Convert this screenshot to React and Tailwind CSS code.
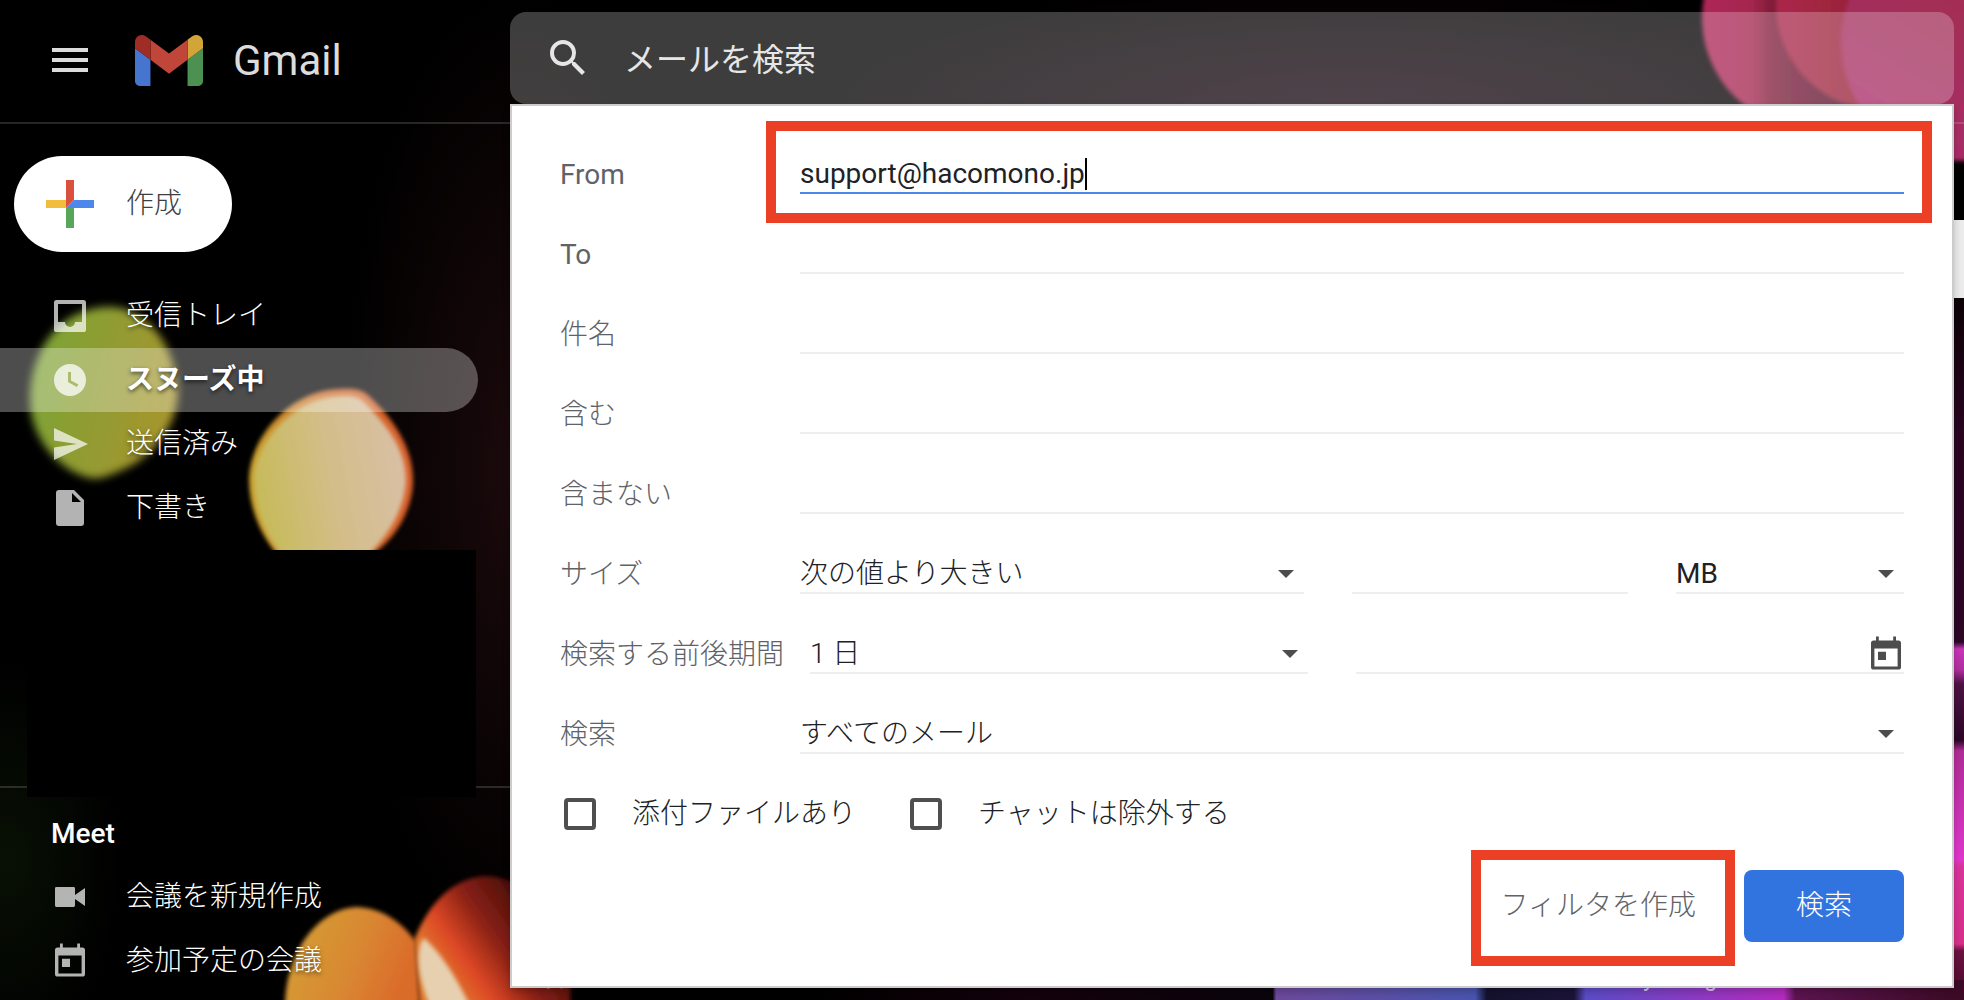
import { useState } from "react";

function Backdrop() {
  return (
    <svg
      className="absolute inset-0 h-full w-full"
      viewBox="0 0 1964 1000"
      preserveAspectRatio="none"
      aria-hidden="true"
    >
      <defs>
        <filter id="soft" x="-20%" y="-20%" width="140%" height="140%">
          <feGaussianBlur stdDeviation="4" />
        </filter>
        <filter id="edge" x="-20%" y="-20%" width="140%" height="140%">
          <feGaussianBlur stdDeviation="2" />
        </filter>
        <radialGradient id="warm">
          <stop offset="0" stopColor="#1c0a0c" />
          <stop offset="1" stopColor="#1c0a0c" stopOpacity="0" />
        </radialGradient>
        <radialGradient id="moss">
          <stop offset="0" stopColor="#081004" />
          <stop offset="1" stopColor="#081004" stopOpacity="0" />
        </radialGradient>
        <radialGradient id="plum">
          <stop offset="0" stopColor="#1a0812" />
          <stop offset="1" stopColor="#1a0812" stopOpacity="0" />
        </radialGradient>
        <linearGradient id="green" x1="0" y1="0.3" x2="1" y2="0.6">
          <stop offset="0" stopColor="#7ba537" />
          <stop offset="0.5" stopColor="#929b30" />
          <stop offset="1" stopColor="#a8952f" />
        </linearGradient>
        <linearGradient id="cream" x1="0" y1="0.6" x2="1" y2="0.4">
          <stop offset="0" stopColor="#c6bb58" />
          <stop offset="0.5" stopColor="#d3bd88" />
          <stop offset="1" stopColor="#d9c0a6" />
        </linearGradient>
        <linearGradient id="rim" x1="0" y1="0" x2="1" y2="0">
          <stop offset="0" stopColor="#c9a02c" />
          <stop offset="0.5" stopColor="#d0692a" />
          <stop offset="1" stopColor="#d9602c" />
        </linearGradient>
        <linearGradient id="amber" x1="0" y1="0" x2="1" y2="0.3">
          <stop offset="0" stopColor="#d3a135" />
          <stop offset="0.6" stopColor="#d98832" />
          <stop offset="1" stopColor="#da6c2b" />
        </linearGradient>
        <linearGradient id="ember" gradientUnits="userSpaceOnUse" x1="435" y1="970" x2="535" y2="900">
          <stop offset="0" stopColor="#e07a2c" />
          <stop offset="0.25" stopColor="#dd4826" />
          <stop offset="0.55" stopColor="#8a2114" />
          <stop offset="1" stopColor="#3f0a0c" />
        </linearGradient>
        <linearGradient id="rose" x1="0" y1="0" x2="1" y2="0">
          <stop offset="0" stopColor="#ae2757" />
          <stop offset="0.22" stopColor="#a5264f" />
          <stop offset="0.32" stopColor="#7d1c38" />
          <stop offset="0.9" stopColor="#3a0a28" />
        </linearGradient>
        <linearGradient id="crimson" x1="0" y1="0" x2="1" y2="0">
          <stop offset="0" stopColor="#ab264c" />
          <stop offset="0.4" stopColor="#982436" />
          <stop offset="1" stopColor="#8a2030" />
        </linearGradient>
        <linearGradient id="orchid" x1="0" y1="1" x2="0.6" y2="0">
          <stop offset="0" stopColor="#b02a72" />
          <stop offset="0.5" stopColor="#a32f5c" />
          <stop offset="1" stopColor="#a52a4a" />
        </linearGradient>
        <linearGradient id="strip" gradientUnits="userSpaceOnUse" x1="0" y1="298" x2="0" y2="1000">
          <stop offset="0" stopColor="#0c0206" />
          <stop offset="0.2" stopColor="#2a0522" />
          <stop offset="0.49" stopColor="#2c0726" />
          <stop offset="0.5" stopColor="#c935b8" />
          <stop offset="0.53" stopColor="#b02f9c" />
          <stop offset="0.55" stopColor="#4d1144" />
          <stop offset="0.63" stopColor="#2c0726" />
          <stop offset="0.645" stopColor="#b02c96" />
          <stop offset="0.8" stopColor="#df36cc" />
          <stop offset="0.81" stopColor="#d8349c" />
          <stop offset="0.92" stopColor="#d6308a" />
          <stop offset="0.93" stopColor="#6a123e" />
          <stop offset="1" stopColor="#4a0a2c" />
        </linearGradient>
        <linearGradient id="floor" gradientUnits="userSpaceOnUse" x1="800" y1="0" x2="1964" y2="0">
          <stop offset="0" stopColor="#000000" />
          <stop offset="0.2" stopColor="#14020c" />
          <stop offset="0.406" stopColor="#0a040c" />
          <stop offset="0.409" stopColor="#6d4a9c" />
          <stop offset="0.58" stopColor="#4a55b0" />
          <stop offset="0.59" stopColor="#14122e" />
          <stop offset="0.665" stopColor="#1c1438" />
          <stop offset="0.675" stopColor="#5c4cc8" />
          <stop offset="0.845" stopColor="#b42cc0" />
          <stop offset="0.855" stopColor="#5c1450" />
          <stop offset="1" stopColor="#3c0a24" />
        </linearGradient>
      </defs>

      <ellipse cx="520" cy="470" rx="180" ry="480" fill="url(#warm)" />
      <ellipse cx="10" cy="860" rx="110" ry="200" fill="url(#moss)" />
      <ellipse cx="1350" cy="110" rx="560" ry="130" fill="url(#plum)" />

      <path
        d="M110 307C146 307 176 345 178 392C178 425 152 458 122 470C108 476 100 480 90 478C62 472 30 440 30 400C30 348 62 307 110 307Z"
        fill="url(#green)"
        filter="url(#soft)"
      />
      <path
        d="M340 389C354 388 362 389 370 397C392 418 413 446 413 480C413 508 396 540 372 554L282 560C264 541 249 512 249 480C249 440 288 390 340 389Z"
        fill="url(#rim)"
        filter="url(#edge)"
      />
      <path
        d="M340 396C350 395 358 396 363 401C386 424 406 448 406 480C405 508 389 538 362 560L286 560C268 541 254 512 254 480C254 445 292 397 340 396Z"
        fill="url(#cream)"
        filter="url(#edge)"
      />
      <path
        d="M414 940C430 900 455 878 485 876C520 876 560 910 572 950L570 1010L420 1010Z"
        fill="url(#ember)"
        filter="url(#edge)"
      />
      <path
        d="M285 1010C284 950 320 908 357 907C385 908 405 926 416 942L420 1010Z"
        fill="url(#amber)"
        filter="url(#edge)"
      />
      <path d="M424 938C416 945 416 975 430 1006L470 1006C455 975 440 952 424 938Z" fill="#e6d0b0" filter="url(#edge)" />

      <circle cx="1813" cy="18" r="111" fill="url(#rose)" filter="url(#edge)" />
      <circle cx="1881" cy="5" r="105" fill="url(#crimson)" filter="url(#edge)" />
      <circle cx="1960" cy="42" r="119" fill="url(#orchid)" filter="url(#edge)" />
      <rect x="1940" y="298" width="24" height="702" fill="url(#strip)" />
      <rect x="800" y="980" width="1164" height="20" fill="url(#floor)" />
    </svg>
  );
}

function GmailMark() {
  return (
    <svg viewBox="52 42 88 66" className="h-[51px] w-[68px]" aria-hidden="true">
      <path d="M58 108h14V74L52 59v43c0 3.320 2.690 6 6 6" fill="#4675d0" />
      <path d="M120 108h14c3.320 0 6-2.690 6-6V59l-20 15" fill="#4c9152" />
      <path d="M120 48v26l20-15v-8c0-7.420-8.470-11.650-14.400-7.200" fill="#d3a538" />
      <path d="M72 74V48l24 18 24-18v26L96 92" fill="#bf4638" />
      <path d="M52 51v8l20 15V48l-5.600-4.200c-5.940-4.450-14.400-.22-14.400 7.200" fill="#9f2d25" />
    </svg>
  );
}

function PlusMark() {
  return (
    <svg viewBox="0 0 48 48" className="h-12 w-12" aria-hidden="true">
      <path d="M0 20H20V28H0Z" fill="#f2bc3f" />
      <path d="M20 28H28V48H20Z" fill="#57a65a" />
      <path d="M28 20H48V28H20Z" fill="#4d87ec" />
      <path d="M20 0H28V20L20 28Z" fill="#d9503f" />
    </svg>
  );
}

function Glyph({ d }) {
  return (
    <svg viewBox="0 0 20 20" className="h-10 w-10 shrink-0" fill="currentColor" aria-hidden="true">
      <path fillRule="evenodd" d={d} />
    </svg>
  );
}

const INBOX =
  "M3.300 2H16.700Q18 2 18 3.300V16.700Q18 18 16.700 18H3.300Q2 18 2 16.700V3.300Q2 2 3.300 2ZM4 4V13H7.500A2.500 2.500 0 0 0 12.500 13H16V4Z";
const CLOCK = "M10 2A8 8 0 1 0 10 18A8 8 0 1 0 10 2ZM9 6H10.500V10.300L14.200 12.300L13.400 13.500L9 11Z";
const SEND = "M2 2L19 10L2 18V11.800L13.500 10L2 8.300Z";
const DRAFT = "M4.500 1H12L17 6V17.500Q17 19 15.500 19H4.500Q3 19 3 17.500V2.500Q3 1 4.500 1ZM11 2.500V7H15.500Z";
const VIDEO =
  "M3.200 5H11.800Q12.500 5 12.500 5.700V9L17.500 5.500V14.500L12.500 11V14.300Q12.500 15 11.800 15H3.200Q2.500 15 2.500 14.300V5.700Q2.500 5 3.200 5Z";
const CALENDAR =
  "M5 1.300H6.400V3.200H13.600V1.300H15V3.200H16.200Q17.500 3.200 17.500 4.500V16.500Q17.500 17.800 16.200 17.800H3.800Q2.500 17.800 2.500 16.500V4.500Q2.500 3.200 3.800 3.200H5ZM4.200 7.300V16.200H15.800V7.300ZM6 8.900H10V13H6Z";

function NavItem({ d, label, active }) {
  return (
    <a
      href="#"
      className={
        "mr-8 flex h-16 items-center gap-9 rounded-r-full pl-[50px] [text-shadow:0_2px_4px_rgba(0,0,0,0.6)] " +
        (active ? "bg-white/30 font-bold" : "font-light")
      }
    >
      <span className={active ? "text-white/75" : "text-white/70"}>
        <Glyph d={d} />
      </span>
      {label}
    </a>
  );
}

function Sidebar() {
  return (
    <aside className="w-[510px] shrink-0 pt-8 text-[28px] leading-10 text-white">
      <button
        type="button"
        className="mb-8 ml-[14px] flex h-24 items-center gap-8 rounded-full bg-white pr-[50px] pl-8 font-light text-[#3c4043]"
      >
        <PlusMark />
        作成
      </button>
      <nav aria-label="メール">
        <NavItem d={INBOX} label="受信トレイ" />
        <NavItem d={CLOCK} label="スヌーズ中" active />
        <NavItem d={SEND} label="送信済み" />
        <NavItem d={DRAFT} label="下書き" />
      </nav>
      <div className="mt-[10px] border-b-2 border-white/15">
        <div className="-mb-[11px] ml-[27px] mr-[34px] h-[247px] bg-black" />
      </div>
      <nav aria-label="Meet" className="pt-[26px]">
        <h2 className="mb-[11px] pl-[51px] font-medium">Meet</h2>
        <NavItem d={VIDEO} label="会議を新規作成" />
        <NavItem d={CALENDAR} label="参加予定の会議" />
      </nav>
    </aside>
  );
}

function Row({ id, label, latin, children }) {
  return (
    <div className="flex h-20 items-end">
      <label
        htmlFor={id}
        className={
          "h-10 min-w-60 shrink-0 leading-[42px] whitespace-nowrap text-[#5f6368] " +
          (latin ? "font-normal" : "font-light")
        }
      >
        {label}
      </label>
      {children}
    </div>
  );
}

const LINE = "h-10 w-full min-w-0 border-b-2 border-[#eeeeee] bg-transparent outline-none";

function Picker({ id, label, option, latin }) {
  return (
    <div className="relative min-w-0 flex-1">
      <select
        id={id}
        aria-label={label}
        className={LINE + " block appearance-none rounded-none " + (latin ? "font-normal" : "font-light")}
      >
        <option>{option}</option>
      </select>
      <svg
        viewBox="0 0 16 8"
        className="pointer-events-none absolute top-4 right-2.5 h-2 w-4"
        fill="#4d4d4d"
        aria-hidden="true"
      >
        <path d="M0 0H16L8 8Z" />
      </svg>
    </div>
  );
}

function Check({ label }) {
  return (
    <label className="flex h-10 items-center gap-9 font-light">
      <input
        type="checkbox"
        className="h-8 w-8 appearance-none rounded-[4px] border-4 border-[#4f4f4f] bg-white checked:bg-[#4f4f4f]"
      />
      {label}
    </label>
  );
}

function FilterPanel() {
  const [from, setFrom] = useState("support@hacomono.jp");
  return (
    <div className="absolute inset-x-0 top-full border-2 border-[#cccccc] bg-white px-12 pt-2 pb-11 text-[28px] leading-10 text-[#202124] shadow-[0_4px_8px_rgba(0,0,0,0.2)]">
      <Row id="from" label="From" latin>
        <div className="relative flex h-10 flex-1 border-b-2 border-[#4d87ec]">
          <input
            id="from"
            value={from}
            onChange={(e) => setFrom(e.target.value)}
            className="field-sizing-content bg-transparent pt-0.5 caret-transparent outline-none"
          />
          <span className="mt-1 h-8 w-0.5 bg-black" />
          <span className="pointer-events-none absolute -top-[33px] -right-7 -bottom-[31px] -left-[34px] border-[10px] border-[#eb4026]" />
        </div>
      </Row>
      <Row id="to" label="To" latin>
        <input id="to" className={LINE} />
      </Row>
      <Row id="subject" label="件名">
        <input id="subject" className={LINE} />
      </Row>
      <Row id="has" label="含む">
        <input id="has" className={LINE} />
      </Row>
      <Row id="hasnot" label="含まない">
        <input id="hasnot" className={LINE} />
      </Row>
      <Row id="size" label="サイズ">
        <div className="grid flex-1 grid-cols-[504fr_276fr_228fr] gap-12">
          <Picker id="size" option="次の値より大きい" />
          <input aria-label="サイズの値" className={LINE} />
          <Picker label="単位" option="MB" latin />
        </div>
      </Row>
      <Row id="within" label="検索する前後期間">
        <div className="ml-2.5 grid flex-1 grid-cols-[498fr_548fr] gap-12">
          <Picker id="within" option="1 日" />
          <div className="flex h-10 border-b-2 border-[#eeeeee]">
            <input aria-label="日付" className="min-w-0 flex-1 bg-transparent outline-none" />
            <button type="button" aria-label="日付を選択" className="-mr-0.5 h-10 text-[#4d4d4d]">
              <Glyph d={CALENDAR} />
            </button>
          </div>
        </div>
      </Row>
      <Row id="scope" label="検索">
        <Picker id="scope" option="すべてのメール" />
      </Row>
      <div className="flex h-20 items-end gap-[54px] pl-1">
        <Check label="添付ファイルあり" />
        <Check label="チャットは除外する" />
      </div>
      <div className="mt-9 flex justify-end gap-6 font-light">
        <button type="button" className="relative h-[72px] px-6 text-[#5f6368]">
          フィルタを作成
          <span className="pointer-events-none absolute -top-5 -right-[15px] -bottom-6 -left-1.5 border-[10px] border-[#eb4026]" />
        </button>
        <button type="button" className="h-[72px] w-40 rounded-lg bg-[#3174e0] text-white">
          検索
        </button>
      </div>
    </div>
  );
}

export default function App() {
  return (
    <div className="relative flex min-h-screen flex-col overflow-hidden bg-black font-['Roboto','Noto_Sans_CJK_JP',sans-serif]">
      <Backdrop />
      <header className="relative z-10 flex h-[124px] border-b-2 border-white/15">
        <div className="flex h-[120px] w-[510px] shrink-0 items-center pl-[52px] text-[#dcdcdc]">
          <button type="button" aria-label="メインメニュー" className="mr-[47px] flex w-9 flex-col gap-1.5">
            <span className="h-1 bg-current" />
            <span className="h-1 bg-current" />
            <span className="h-1 bg-current" />
          </button>
          <a href="#" className="flex items-center gap-[30px] text-[42px]">
            <GmailMark />
            Gmail
          </a>
        </div>
        <form className="relative mt-3 mr-[10px] h-[92px] flex-1" onSubmit={(e) => e.preventDefault()}>
          <div className="flex h-full items-center gap-8 rounded-2xl bg-white/24 pl-[34px] text-[#e6e6e6]">
            <button type="submit" aria-label="検索">
              <svg viewBox="0 0 24 24" className="h-12 w-12" fill="currentColor" aria-hidden="true">
                <path d="M15.500 14h-.79l-.28-.27A6.471 6.471 0 0 0 16 9.500 6.500 6.500 0 1 0 9.500 16c1.610 0 3.090-.59 4.230-1.570l.27.28v.79l5 4.990L20.490 19l-4.990-5zm-6 0C7.010 14 5 11.990 5 9.500S7.010 5 9.500 5 14 7.010 14 9.500 11.990 14 9.500 14z" />
              </svg>
            </button>
            <input
              aria-label="メールを検索"
              placeholder="メールを検索"
              className="min-w-0 flex-1 bg-transparent pt-1 text-[32px] outline-none placeholder:text-[#e6e6e6]"
            />
          </div>
          <FilterPanel />
        </form>
      </header>
      <div className="relative flex flex-1">
        <Sidebar />
        <main className="flex flex-1 flex-col pt-24">
          <div className="h-[78px] bg-[#ececec]" />
          <footer className="mt-auto flex pr-[228px] pb-1.5 pl-8 text-[24px] leading-8 text-white/70">
            <a href="#">管理</a>
            <span className="ml-auto">Powered by Google</span>
          </footer>
        </main>
      </div>
    </div>
  );
}
